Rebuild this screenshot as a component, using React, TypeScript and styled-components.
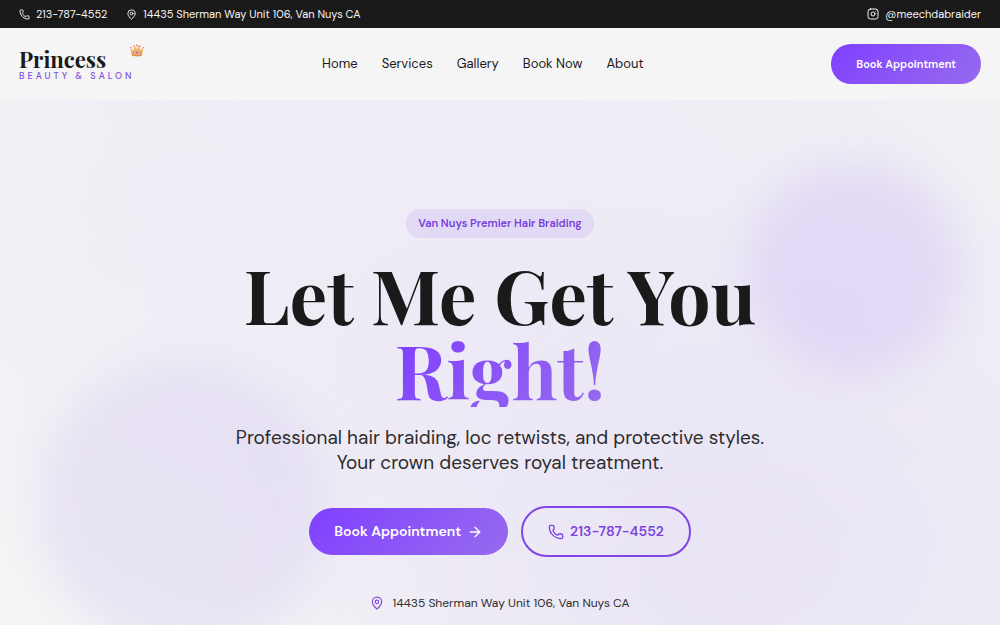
import React from "react";
import styled, { createGlobalStyle } from "styled-components";
import { ArrowRight, Instagram, MapPin, Phone } from "lucide-react";

const sans = `"DM Sans", Inter, "Liberation Sans", sans-serif`;
const serif = `"Playfair Display", "Liberation Serif", serif`;

const GlobalStyle = createGlobalStyle`
  *, *::before, *::after { box-sizing: border-box; }
  body { margin: 0; background: #f5f5f5; color: #1a1a1a; font-family: ${sans}; }
  html, body, #root { height: 100%; }
  a { color: inherit; text-decoration: none; }
  svg { flex: none; }
`;

const Page = styled.div`
  display: flex;
  flex-direction: column;
  min-height: 100%;
`;

const TopBar = styled.div`
  display: flex;
  justify-content: space-between;
  padding: 0 19px;
  background: #1a1a1a;
  color: #f5f5f5;
`;

const TopGroup = styled.div`
  display: flex;
  gap: 19px;
`;

const TopLink = styled.a`
  display: flex;
  align-items: center;
  gap: 6px;
  font-size: 11px;
  line-height: 28px;
  white-space: nowrap;
`;

const Header = styled.header`
  display: flex;
  justify-content: space-between;
  align-items: center;
  padding: 16px 19px;
  background: #f5f5f5;
`;

const Brand = styled.a`
  position: relative;
  display: flex;
  flex-direction: column;
`;

const BrandName = styled.span`
  font: bold 22px/24px ${serif};
`;

const BrandTag = styled.span`
  color: #7c4ddb;
  font-size: 9px;
  font-weight: 500;
  line-height: 10px;
  letter-spacing: 3px;
`;

const Crown = styled.svg`
  position: absolute;
  top: -3px;
  right: -10px;
  width: 14px;
  height: 13px;
`;

const Nav = styled.nav`
  display: flex;
  gap: 24px;
  font-size: 13px;
  line-height: 20px;
`;

const Button = styled.button<{ $size?: "small" | "large"; $outline?: boolean }>`
  display: inline-flex;
  align-items: center;
  gap: 6px;
  padding: ${(p) => (p.$size === "small" ? "10px 25px" : "13px 25px")};
  border: ${(p) => (p.$outline ? "2px solid #7f45e6" : "0")};
  border-radius: 40px;
  background: ${(p) => (p.$outline ? "transparent" : "linear-gradient(135deg, #7f40ff, #976bee)")};
  color: ${(p) => (p.$outline ? "#7c43df" : "#ffffff")};
  font-family: inherit;
  font-weight: 600;
  font-size: ${(p) => (p.$size === "small" ? "11px" : "14px")};
  line-height: ${(p) => (p.$size === "small" ? "20px" : "21px")};
  white-space: nowrap;
`;

const Hero = styled.main`
  position: relative;
  flex: 1;
  display: flex;
  flex-direction: column;
  align-items: center;
  padding: 109px 19px 12px;
  overflow: hidden;
  background:
    radial-gradient(ellipse 55% 80% at 74% 90%, rgba(226, 216, 245, 0.55), rgba(226, 216, 245, 0)),
    radial-gradient(ellipse 60% 80% at 42% 35%, rgba(232, 226, 247, 0.4), rgba(232, 226, 247, 0)),
    linear-gradient(200deg, #f0eff4, #f2f1f5 50%, #f5f5f5);
  text-align: center;
`;

const Glow = styled.div<{ $side: "left" | "right" }>`
  position: absolute;
  border-radius: 50%;
  ${(p) =>
    p.$side === "right"
      ? "top: 62px; right: 40px; width: 212px; height: 212px; background: rgba(208, 190, 248, 0.4);"
      : "top: 262px; left: 38px; width: 288px; height: 288px; background: rgba(211, 200, 242, 0.35);"}
  filter: blur(20px);
`;

const Content = styled.div`
  position: relative;
  display: flex;
  flex-direction: column;
  align-items: center;
`;

const Badge = styled.span`
  padding: 0 12px;
  border-radius: 14px;
  background: #e2daf5;
  color: #7740dc;
  font-weight: 600;
  font-size: 11px;
  line-height: 29px;
`;

const Title = styled.h1`
  margin: 19px 0 0;
  font: bold 75px/75px ${serif};
`;

const Highlight = styled.span`
  display: block;
  width: fit-content;
  margin: 0 auto;
  background: linear-gradient(135deg, #7f40ff, #976bee);
  background-clip: text;
  color: transparent;
`;

const Lead = styled.p`
  margin: 18px 0 0;
  color: #2d2d2d;
  font-size: 19px;
  line-height: 25px;
`;

const Actions = styled.div`
  display: flex;
  flex-wrap: wrap;
  align-items: center;
  justify-content: center;
  gap: 13px;
  margin-top: 31px;
`;

const Address = styled.p`
  display: flex;
  align-items: center;
  gap: 8px;
  margin: 36px 0 0;
  color: #2d2d2d;
  font-size: 12px;
  line-height: 20px;
`;

const links = ["Home", "Services", "Gallery", "Book Now", "About"];
const phone = "213-787-4552";
const address = "14435 Sherman Way Unit 106, Van Nuys CA";

export default function App() {
  return (
    <Page>
      <GlobalStyle />
      <TopBar>
        <TopGroup>
          <TopLink href="tel:2137874552"><Phone size={11} />{phone}</TopLink>
          <TopLink href="#location"><MapPin size={11} />{address}</TopLink>
        </TopGroup>
        <TopLink href="#instagram"><Instagram size={12} />@meechdabraider</TopLink>
      </TopBar>
      <Header>
        <Brand href="#home">
          <BrandName>Princess</BrandName>
          <BrandTag>BEAUTY &amp; SALON</BrandTag>
          <Crown viewBox="0 0 28 26" aria-hidden="true">
            <path d="M3 23 1 8l6 5 2-9 5 6 4-8 3 10 6-5-3 16Q14 27 3 23Z" fill="#f3b56f" />
            <path d="M4 20q10 3 20 0v3q-10 3-20 0Z" fill="#dd8d58" />
            <g fill="#e58a5c">
              <circle cx="1.5" cy="7" r="1.5" /><circle cx="8" cy="4" r="1.7" />
              <circle cx="14" cy="3" r="2" /><circle cx="20" cy="4" r="1.7" />
              <circle cx="26.5" cy="7" r="1.5" />
            </g>
            <circle cx="14" cy="17" r="2.6" fill="#8680cf" />
            <circle cx="7" cy="17" r="1.6" fill="#df6865" />
            <circle cx="21" cy="17" r="1.6" fill="#df6865" />
          </Crown>
        </Brand>
        <Nav>
          {links.map((label) => (
            <a key={label} href={`#${label.toLowerCase().replace(" ", "-")}`}>{label}</a>
          ))}
        </Nav>
        <Button $size="small">Book Appointment</Button>
      </Header>
      <Hero>
        <Glow $side="right" />
        <Glow $side="left" />
        <Content>
          <Badge>Van Nuys Premier Hair Braiding</Badge>
          <Title>
            Let Me Get You
            <Highlight>Right!</Highlight>
          </Title>
          <Lead>
            Professional hair braiding, loc retwists, and protective styles.
            <br />
            Your crown deserves royal treatment.
          </Lead>
          <Actions>
            <Button>Book Appointment<ArrowRight size={16} /></Button>
            <Button $outline><Phone size={16} />{phone}</Button>
          </Actions>
          <Address><MapPin size={14} color="#7f45e6" />{address}</Address>
        </Content>
      </Hero>
    </Page>
  );
}
